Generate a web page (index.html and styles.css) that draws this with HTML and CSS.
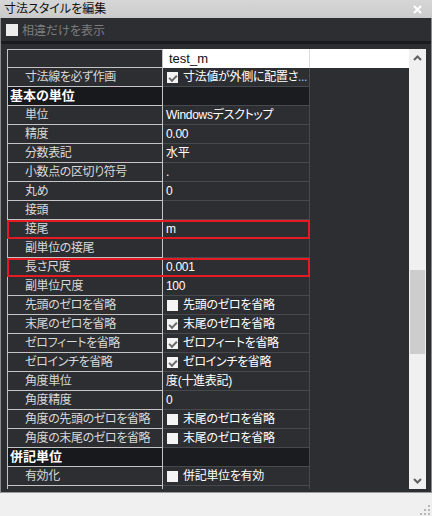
FILE: index.html
```html
<!DOCTYPE html>
<html lang="ja">
<head>
<meta charset="utf-8">
<link rel="stylesheet" href="styles.css">
</head>
<body>
<div class="window">
  <div class="titlebar">
    <span class="title">寸法スタイルを編集</span>
    <svg class="close" width="9" height="9" viewBox="0 0 9 9"><path d="M1 1L8 8M8 1L1 8" stroke="#fff" stroke-width="2"/></svg>
  </div>
  <div class="panel">
    <div class="toolbar">
      <span class="tbox"></span>
      <span class="dim">相違だけを表示</span>
    </div>
    <div class="sep"></div>
    <div class="gridwrap">
      <div class="grid">
        <div class="row head"><div class="pair"><div class="label"></div><div class="value"><span class="name">test_m</span></div></div><div class="rest"></div></div>
        <div class="row"><div class="pair"><div class="label">寸法線を必ず作画</div><div class="value"><span class="cb on"></span>寸法値が外側に配置さ<span class="ell">...</span></div></div><div class="rest"></div></div>
        <div class="row cat"><div class="pair"><div class="label">基本の単位</div><div class="value"></div></div><div class="rest"></div></div>
        <div class="row"><div class="pair"><div class="label">単位</div><div class="value">Windowsデスクトップ</div></div><div class="rest"></div></div>
        <div class="row"><div class="pair"><div class="label">精度</div><div class="value">0.00</div></div><div class="rest"></div></div>
        <div class="row"><div class="pair"><div class="label">分数表記</div><div class="value">水平</div></div><div class="rest"></div></div>
        <div class="row"><div class="pair"><div class="label">小数点の区切り符号</div><div class="value">.</div></div><div class="rest"></div></div>
        <div class="row"><div class="pair"><div class="label">丸め</div><div class="value">0</div></div><div class="rest"></div></div>
        <div class="row"><div class="pair"><div class="label">接頭</div><div class="value"></div></div><div class="rest"></div></div>
        <div class="row"><div class="pair mark"><div class="label">接尾</div><div class="value">m</div></div><div class="rest"></div></div>
        <div class="row"><div class="pair"><div class="label">副単位の接尾</div><div class="value"></div></div><div class="rest"></div></div>
        <div class="row"><div class="pair mark"><div class="label">長さ尺度</div><div class="value">0.001</div></div><div class="rest"></div></div>
        <div class="row"><div class="pair"><div class="label">副単位尺度</div><div class="value">100</div></div><div class="rest"></div></div>
        <div class="row"><div class="pair"><div class="label">先頭のゼロを省略</div><div class="value"><span class="cb"></span>先頭のゼロを省略</div></div><div class="rest"></div></div>
        <div class="row"><div class="pair"><div class="label">末尾のゼロを省略</div><div class="value"><span class="cb on"></span>末尾のゼロを省略</div></div><div class="rest"></div></div>
        <div class="row"><div class="pair"><div class="label">ゼロフィートを省略</div><div class="value"><span class="cb on"></span>ゼロフィートを省略</div></div><div class="rest"></div></div>
        <div class="row"><div class="pair"><div class="label">ゼロインチを省略</div><div class="value"><span class="cb on"></span>ゼロインチを省略</div></div><div class="rest"></div></div>
        <div class="row"><div class="pair"><div class="label">角度単位</div><div class="value">度(十進表記)</div></div><div class="rest"></div></div>
        <div class="row"><div class="pair"><div class="label">角度精度</div><div class="value">0</div></div><div class="rest"></div></div>
        <div class="row"><div class="pair"><div class="label">角度の先頭のゼロを省略</div><div class="value"><span class="cb"></span>末尾のゼロを省略</div></div><div class="rest"></div></div>
        <div class="row"><div class="pair"><div class="label">角度の末尾のゼロを省略</div><div class="value"><span class="cb"></span>末尾のゼロを省略</div></div><div class="rest"></div></div>
        <div class="row cat"><div class="pair"><div class="label">併記単位</div><div class="value"></div></div><div class="rest"></div></div>
        <div class="row"><div class="pair"><div class="label">有効化</div><div class="value"><span class="cb"></span>併記単位を有効</div></div><div class="rest"></div></div>
        <div class="row"><div class="pair"><div class="label"></div><div class="value"></div></div><div class="rest"></div></div>
      </div>
      <div class="scrollbar">
        <div class="sbtn"><svg width="9" height="6" viewBox="0 0 9 6"><path d="M1 5L4.5 1.5L8 5" fill="none" stroke="#606060" stroke-width="2"/></svg></div>
        <div class="track"><div class="thumb"></div></div>
        <div class="sbtn"><svg width="9" height="6" viewBox="0 0 9 6"><path d="M1 1L4.5 4.5L8 1" fill="none" stroke="#606060" stroke-width="2"/></svg></div>
      </div>
    </div>
  </div>
  <div class="footer">
    <svg class="grip" width="10" height="10" viewBox="0 0 10 10" fill="#b8b8b8">
      <rect x="8" y="0" width="2" height="2"/>
      <rect x="4" y="4" width="2" height="2"/><rect x="8" y="4" width="2" height="2"/>
      <rect x="0" y="8" width="2" height="2"/><rect x="4" y="8" width="2" height="2"/><rect x="8" y="8" width="2" height="2"/>
    </svg>
  </div>
</div>
</body>
</html>
```

FILE: styles.css
```css
* { box-sizing: border-box; }
html, body { margin: 0; padding: 0; }
body {
  width: 432px;
  height: 516px;
  background: #f0f0f0;
  font-family: "Liberation Sans", "Noto Sans CJK JP", sans-serif;
  font-size: 12px;
  font-feature-settings: "palt";
  overflow: hidden;
}
.window { display: flex; flex-direction: column; width: 432px; height: 516px; }

.titlebar {
  height: 18px;
  flex: none;
  background: linear-gradient(#d6d6d6, #cbcbcb);
  display: flex;
  align-items: center;
  justify-content: space-between;
  padding: 0 10px 0 4px;
  color: #111;
}
.title { font-size: 12px; line-height: 18px; }
.close { display: block; }

.panel {
  flex: none;
  height: 475px;
  background: #2d2e32;
  border-left: 1px solid #8c8c8c;
  border-right: 1px solid #8c8c8c;
  border-bottom: 1px solid #9a9a9a;
  display: flex;
  flex-direction: column;
}
.toolbar {
  height: 23px;
  display: flex;
  align-items: center;
  padding-left: 5px;
  gap: 4px;
}
.tbox { width: 12px; height: 12px; background: #ececec; display: block; }
.dim { color: #7d7d7d; font-size: 12px; }
.sep { height: 3px; background: #1a1b1e; margin-bottom: 5px; }

.gridwrap {
  height: 440px;
  display: flex;
  padding-left: 6px;
  padding-right: 4px;
}
.grid {
  width: 402px;
  height: 440px;
  overflow: hidden;
  display: flex;
  flex-direction: column;
}
.row { display: flex; height: 19px; flex: none; }
.pair { display: flex; width: 303px; flex: none; }
.pair.mark { outline: 2px solid #e51a22; outline-offset: -2px; }
.label {
  width: 156px;
  height: 19px;
  border-left: 1px solid #c4c4c4;
  border-right: 1px solid #c4c4c4;
  border-bottom: 1px solid #c4c4c4;
  padding-left: 17px;
  color: #d9d9d9;
  line-height: 18px;
  white-space: nowrap;
  overflow: hidden;
  letter-spacing: -0.4px;
}
.value {
  width: 147px;
  height: 19px;
  border-bottom: 1px solid #46494e;
  border-right: 1px solid #46494e;
  padding-left: 3px;
  color: #fff;
  line-height: 18px;
  white-space: nowrap;
  overflow: hidden;
  display: flex;
  align-items: center;
  letter-spacing: -0.3px;
}
.rest { flex: 1; height: 19px; background: #2d2e32; }

.head .label { border-top: 1px solid #c4c4c4; }
.head .value { background: #fff; border-right: 1px solid #dcdcdc; border-bottom: none; color: #111; padding-left: 6px; letter-spacing: 0; }
.head .rest { background: #fff; }
.name { font-size: 13px; }

.cat .label { background: #18191c; padding-left: 2px; font-weight: bold; color: #fff; font-size: 13px; letter-spacing: 0; }
.cat .value { background: #1b1c1f; }

.cb {
  width: 11px;
  height: 11px;
  background: #f4f4f4;
  margin-left: 1px;
  margin-right: 5px;
  flex: none;
  position: relative;
}
.cb.on::after {
  content: "";
  position: absolute;
  left: 2px;
  top: 1px;
  width: 6px;
  height: 3px;
  border-left: 2px solid #6a6a6a;
  border-bottom: 2px solid #6a6a6a;
  transform: translate(0, 2px) rotate(-45deg);
}
.ell { color: #9ecbff; }

.scrollbar {
  width: 17px;
  height: 440px;
  background: #f0f0f0;
  display: flex;
  flex-direction: column;
}
.sbtn { height: 17px; flex: none; display: flex; align-items: center; justify-content: center; }
.sbtn svg { display: block; }
.track { flex: 1; padding-top: 204px; padding-left: 1px; }
.thumb { width: 15px; height: 84px; background: #cdcdcd; }

.footer { flex: 1; display: flex; justify-content: flex-end; align-items: flex-end; padding: 0 2px 1px 0; }
.grip { display: block; }
```
